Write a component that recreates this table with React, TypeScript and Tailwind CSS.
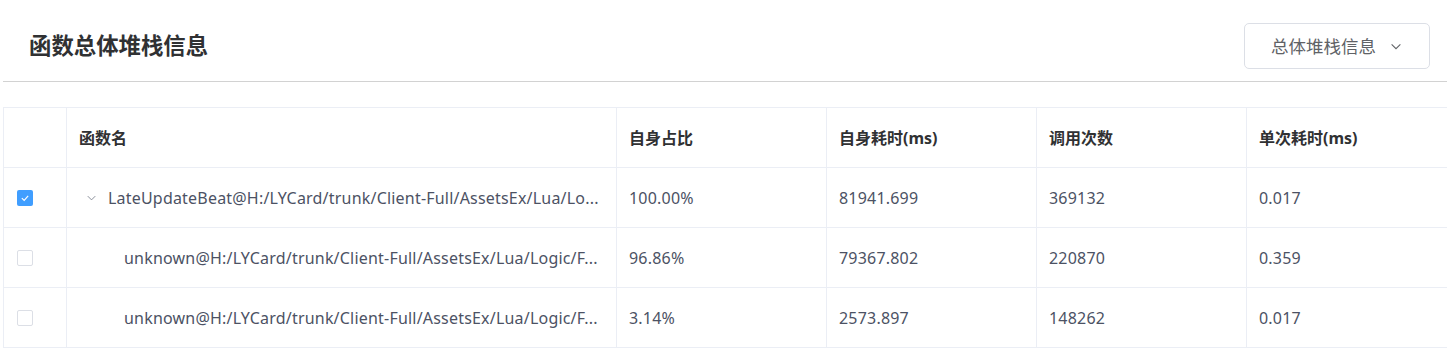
const rows = [
  {
    checked: true,
    level: 0,
    name: "LateUpdateBeat@H:/LYCard/trunk/Client-Full/AssetsEx/Lua/Lo...",
    ratio: "100.00%",
    self: "81941.699",
    calls: "369132",
    per: "0.017",
  },
  {
    checked: false,
    level: 1,
    name: "unknown@H:/LYCard/trunk/Client-Full/AssetsEx/Lua/Logic/F...",
    ratio: "96.86%",
    self: "79367.802",
    calls: "220870",
    per: "0.359",
  },
  {
    checked: false,
    level: 1,
    name: "unknown@H:/LYCard/trunk/Client-Full/AssetsEx/Lua/Logic/F...",
    ratio: "3.14%",
    self: "2573.897",
    calls: "148262",
    per: "0.017",
  },
];

const cols = "grid grid-cols-[63px_550px_210px_210px_210px_1fr]";

function Chevron({ className }: { className: string }) {
  return (
    <svg viewBox="0 0 12 8" className={className} fill="none" stroke="currentColor" strokeWidth="1.2">
      <path d="M1 1.5 L6 6.5 L11 1.5" />
    </svg>
  );
}

function Checkbox({ checked }: { checked: boolean }) {
  if (checked) {
    return (
      <span className="flex h-4 w-4 items-center justify-center rounded-[2px] bg-[#409eff]">
        <svg viewBox="0 0 12 12" className="h-[10px] w-[10px]" fill="none" stroke="white" strokeWidth="1.4">
          <path d="M2.2 6.2 L5 8.8 L9.8 3.4" />
        </svg>
      </span>
    );
  }
  return <span className="block h-4 w-4 rounded-[2px] border border-[#dcdfe6] bg-white" />;
}

export default function App() {
  return (
    <div className="h-[357px] w-full overflow-hidden bg-white pl-[3px] font-['Noto_Sans','Noto_Sans_CJK_SC',sans-serif]">
      <div className="flex h-[82px] items-start justify-between border-b border-[#d2d2d2] pl-[26px] pr-[17px] pt-[23px]">
        <h1 className="mt-[6px] text-[22.4px] font-bold leading-[34px] text-[#303133]">函数总体堆栈信息</h1>
        <button className="flex h-[46px] w-[186px] items-center rounded-[5px] border border-[#dcdfe6] bg-white pl-[26px] text-[17.5px] text-[#606266]">
          总体堆栈信息
          <Chevron className="ml-[14px] h-[7px] w-[12px] text-[#606266]" />
        </button>
      </div>

      <div className="mt-[25px] border-l border-t border-[#ebeef5] text-[16px]">
        <div className={`${cols} h-[60px] border-b border-[#ebeef5] font-bold text-[#303133]`}>
          <div className="border-r border-[#ebeef5]" />
          <div className="flex items-center border-r border-[#ebeef5] pl-[12px]">函数名</div>
          <div className="flex items-center border-r border-[#ebeef5] pl-[12px]">自身占比</div>
          <div className="flex items-center border-r border-[#ebeef5] pl-[12px]">自身耗时(ms)</div>
          <div className="flex items-center border-r border-[#ebeef5] pl-[12px]">调用次数</div>
          <div className="flex items-center pl-[12px]">单次耗时(ms)</div>
        </div>
        {rows.map((r, i) => (
          <div key={i} className={`${cols} h-[60px] border-b border-[#ebeef5] tracking-[0.2px] text-[#4c5264]`}>
            <div className="flex items-center border-r border-[#ebeef5] pl-[13px]">
              <Checkbox checked={r.checked} />
            </div>
            <div className="flex items-center overflow-hidden whitespace-nowrap border-r border-[#ebeef5]">
              {r.level === 0 ? (
                <>
                  <Chevron className="ml-[19px] h-[6px] w-[11px] text-[#7d828f]" />
                  <span className="ml-[11px]">{r.name}</span>
                </>
              ) : (
                <span className="ml-[57px]">{r.name}</span>
              )}
            </div>
            <div className="flex items-center border-r border-[#ebeef5] pl-[12px]">{r.ratio}</div>
            <div className="flex items-center border-r border-[#ebeef5] pl-[12px]">{r.self}</div>
            <div className="flex items-center border-r border-[#ebeef5] pl-[12px]">{r.calls}</div>
            <div className="flex items-center pl-[12px]">{r.per}</div>
          </div>
        ))}
      </div>
    </div>
  );
}
